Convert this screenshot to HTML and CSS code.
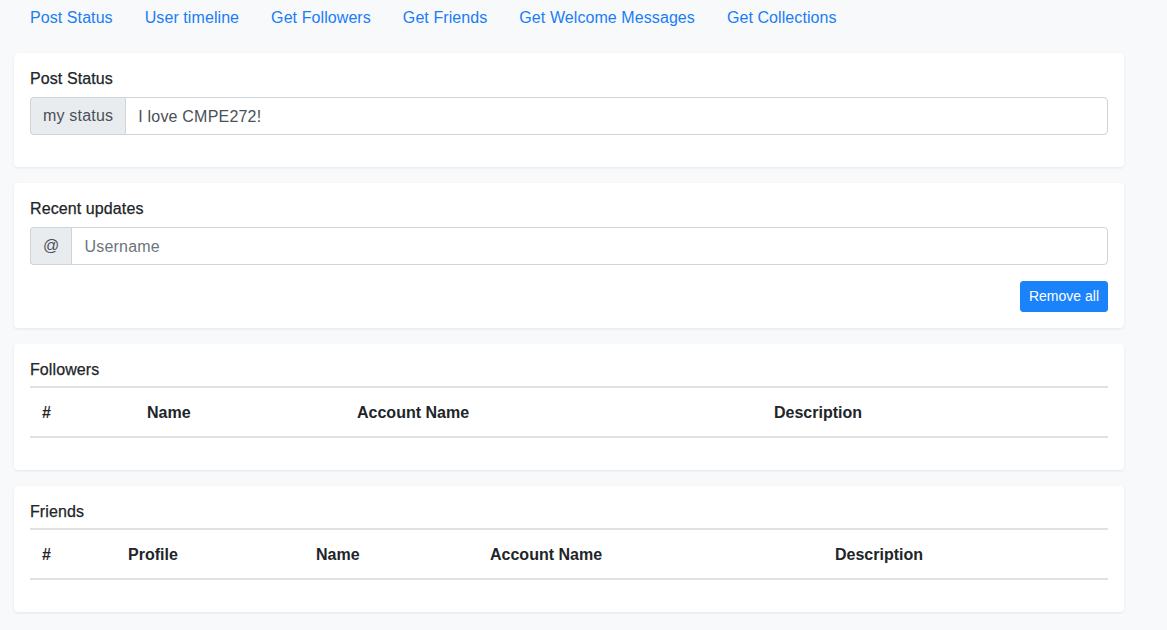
FILE: index.html
```html
<!DOCTYPE html>
<html>
<head>
<meta charset="utf-8">
<link rel="stylesheet" href="styles.css">
</head>
<body>
<div class="page">
  <nav class="nav">
    <a class="nav-link" href="#">Post Status</a>
    <a class="nav-link" href="#">User timeline</a>
    <a class="nav-link" href="#">Get Followers</a>
    <a class="nav-link" href="#">Get Friends</a>
    <a class="nav-link" href="#">Get Welcome Messages</a>
    <a class="nav-link" href="#">Get Collections</a>
  </nav>

  <section class="card">
    <div class="card-title">Post Status</div>
    <div class="input-group">
      <span class="addon">my status</span>
      <input class="field" type="text" value="I love CMPE272!">
    </div>
  </section>

  <section class="card">
    <div class="card-title">Recent updates</div>
    <div class="input-group">
      <span class="addon">@</span>
      <input class="field" type="text" placeholder="Username">
    </div>
    <div class="actions">
      <button class="btn">Remove all</button>
    </div>
  </section>

  <section class="card">
    <div class="card-title card-title-table">Followers</div>
    <table class="table">
      <colgroup>
        <col class="c-f1"><col class="c-f2"><col class="c-f3"><col>
      </colgroup>
      <thead>
        <tr><th>#</th><th>Name</th><th>Account Name</th><th>Description</th></tr>
      </thead>
    </table>
  </section>

  <section class="card">
    <div class="card-title card-title-table">Friends</div>
    <table class="table">
      <colgroup>
        <col class="c-r1"><col class="c-r2"><col class="c-r3"><col class="c-r4"><col>
      </colgroup>
      <thead>
        <tr><th>#</th><th>Profile</th><th>Name</th><th>Account Name</th><th>Description</th></tr>
      </thead>
    </table>
  </section>
</div>
</body>
</html>
```

FILE: styles.css
```css
html, body {
  margin: 0;
  padding: 0;
  background: #f8f9fa;
  font-family: "Liberation Sans", Arial, sans-serif;
  font-size: 16px;
  color: #212529;
}

.page {
  width: 1110px;
  padding: 0 0 20px 14px;
}

.nav {
  display: flex;
  padding-bottom: 16px;
}

.nav-link {
  display: block;
  padding: 6px 16px 7px;
  line-height: 24px;
  color: #1a7df5;
  text-decoration: none;
  letter-spacing: 0.08px;
}

.card {
  background: #fff;
  border-radius: 4px;
  box-shadow: 0 1px 3px rgba(0, 0, 0, 0.08);
  padding: 16px;
  margin-bottom: 16px;
}

.card-title {
  font-weight: 500;
  line-height: 19px;
  margin-bottom: 9px;
  letter-spacing: 0.1px;
  -webkit-text-stroke: 0.25px #212529;
}

.card-title-table {
  margin-bottom: 7px;
}

.input-group {
  display: flex;
  height: 38px;
  margin-bottom: 16px;
}

.addon {
  display: flex;
  align-items: center;
  padding: 0 12px;
  background: #e9ecef;
  border: 1px solid #ced4da;
  border-right: none;
  border-radius: 4px 0 0 4px;
  color: #495057;
  line-height: 24px;
  letter-spacing: 0.2px;
}

.field {
  flex: 1;
  min-width: 0;
  border: 1px solid #ced4da;
  border-radius: 0 4px 4px 0;
  padding: 1px 12px 0;
  font-family: inherit;
  font-size: 16px;
  letter-spacing: 0.2px;
  color: #495057;
  background: #fff;
  outline: none;
}

.field::placeholder {
  color: #6c757d;
}

.actions {
  display: flex;
  justify-content: flex-end;
  margin-top: 1px;
}

.btn {
  background: #1a82fb;
  color: #fff;
  border: 1px solid #1a82fb;
  border-radius: 3px;
  font-family: inherit;
  font-size: 14px;
  line-height: 21px;
  padding: 4px 8px;
  height: 31px;
}

.table {
  width: 100%;
  border-collapse: collapse;
  table-layout: fixed;
  margin-bottom: 16px;
}

.table th {
  text-align: left;
  font-weight: bold;
  padding: 13px 12px 11px;
  line-height: 24px;
  border-top: 2px solid #dee2e6;
  border-bottom: 2px solid #dee2e6;
}

.c-f1 { width: 105px; }
.c-f2 { width: 210px; }
.c-f3 { width: 417px; }

.c-r1 { width: 86px; }
.c-r2 { width: 188px; }
.c-r3 { width: 174px; }
.c-r4 { width: 345px; }
```
